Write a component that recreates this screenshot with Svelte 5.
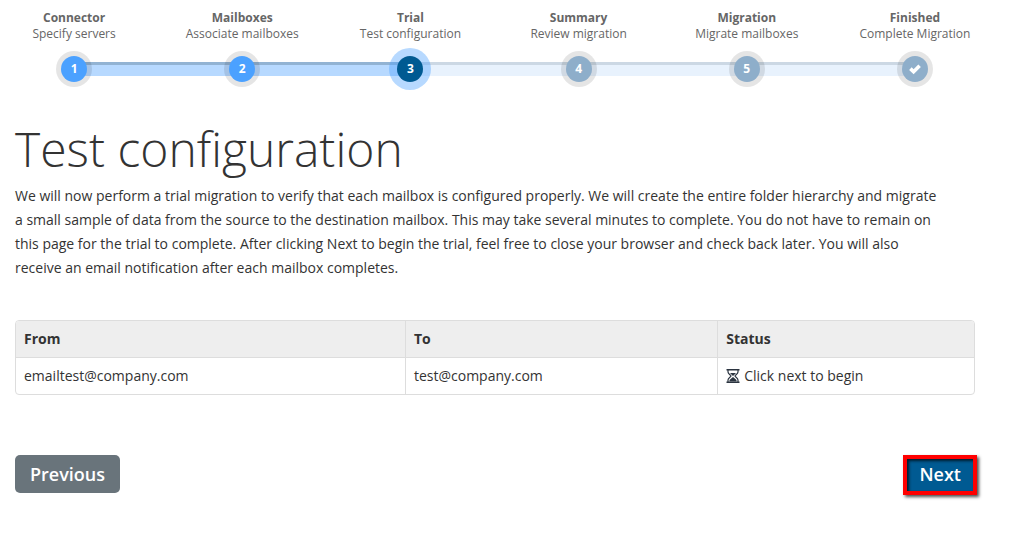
<script>
  const steps = [
    { title: 'Connector', detail: 'Specify servers', state: 'done' },
    { title: 'Mailboxes', detail: 'Associate mailboxes', state: 'done' },
    { title: 'Trial', detail: 'Test configuration', state: 'current' },
    { title: 'Summary', detail: 'Review migration', state: 'pending' },
    { title: 'Migration', detail: 'Migrate mailboxes', state: 'pending' },
    { title: 'Finished', detail: 'Complete Migration', state: 'pending' }
  ];
  const mailboxes = [
    { from: 'emailtest@company.com', to: 'test@company.com', status: 'Click next to begin' }
  ];
</script>

<main class="page">
  <ol class="steps">
    {#each steps as step, i}
      <li class="step {step.state}" aria-current={step.state === 'current' ? 'step' : undefined}>
        <strong>{step.title}</strong>
        <span>{step.detail}</span>
        <div class="marker">
          <span class="dot">
            {#if i === steps.length - 1}
              <svg width="14" height="12" viewBox="0 0 14 12" aria-hidden="true">
                <path d="M2.4 5.6 5.6 8.700 11.600 2.700" fill="none" stroke="#fff" stroke-width="3.600" />
              </svg>
            {:else}
              {i + 1}
            {/if}
          </span>
        </div>
      </li>
    {/each}
  </ol>

  <h1>Test configuration</h1>
  <p>
    We will now perform a trial migration to verify that each mailbox is configured properly. We
    will create the entire folder hierarchy and migrate a small sample of data from the source to
    the destination mailbox. This may take several minutes to complete. You do not have to remain
    on this page for the trial to complete. After clicking Next to begin the trial, feel free to
    close your browser and check back later. You will also receive an email notification after
    each mailbox completes.
  </p>

  <table>
    <thead>
      <tr>
        <th class="from" scope="col">From</th>
        <th class="to" scope="col">To</th>
        <th scope="col">Status</th>
      </tr>
    </thead>
    <tbody>
      {#each mailboxes as box}
        <tr>
          <td>{box.from}</td>
          <td>{box.to}</td>
          <td>
            <div class="status">
              <svg width="14" height="14" viewBox="0 0 14 14" aria-hidden="true">
                <path d="M.5.75h13M.5 13.25h13" stroke="#2b3440" stroke-width="1.500" />
                <path
                  d="M2 1v2C2 5 5 6 5 7S2 9 2 11v2M12 1v2C12 5 9 6 9 7s3 2 3 4v2"
                  fill="none"
                  stroke="#2b3440"
                  stroke-width="1.200"
                />
                <path d="M4 4h6L7 7zM3.500 12.500v-1.500L7 8l3.500 3v1.500z" fill="#2b3440" />
              </svg>
              {box.status}
            </div>
          </td>
        </tr>
      {/each}
    </tbody>
  </table>

  <div class="actions">
    <button type="button" class="previous">Previous</button>
    <button type="button" class="next">Next</button>
  </div>
</main>

<style>
  :global(body) {
    margin: 0;
    background: #fff;
  }

  .page {
    padding: 10px 44px 40px 15px;
    overflow-x: hidden;
    font: 14px/24px 'Open Sans', sans-serif;
    color: #333;
  }

  .steps {
    display: flex;
    margin: 0 -24px 0 -25px;
    padding: 0;
    list-style: none;
    font-size: 12px;
    line-height: 16px;
    color: #666;
  }

  .step {
    flex: 1 1 0;
    display: flex;
    flex-direction: column;
    align-items: center;
    min-width: 0;
  }

  .step strong {
    font-weight: 700;
  }

  .marker {
    position: relative;
    display: flex;
    justify-content: center;
    width: 100%;
    margin-top: 14px;
  }

  /* Track running from this marker to the next one */
  .marker::before {
    content: '';
    position: absolute;
    top: 6px;
    left: 50%;
    box-sizing: border-box;
    width: 100%;
    height: 14px;
    border-top: 3px solid #ccd8e4;
    background: #e8f2fd;
  }

  .done .marker::before {
    border-top-color: #92b3d3;
    background: #b7d9ff;
  }

  .step:last-child .marker::before {
    display: none;
  }

  .dot {
    position: relative;
    z-index: 1;
    display: flex;
    align-items: center;
    justify-content: center;
    width: 26px;
    height: 26px;
    border-radius: 50%;
    background: #8eaeca;
    box-shadow: 0 0 0 5px rgba(0, 0, 0, 0.1);
    color: #fff;
    font-weight: 700;
  }

  .done .dot {
    background: #4ba1ff;
  }

  .current .dot {
    background: #005a92;
    box-shadow: 0 0 0 8px rgba(75, 161, 255, 0.4);
  }

  h1 {
    margin: 34px 0 0;
    font-size: 48px;
    line-height: 66px;
    font-weight: 300;
  }

  p {
    margin: 2px 0 40px;
    padding-right: 30px;
  }

  table {
    width: 100%;
    table-layout: fixed;
    border: 1px solid #ddd;
    border-radius: 4px;
    border-spacing: 0;
    overflow: hidden;
  }

  .from {
    width: 40.6%;
  }

  .to {
    width: 32.6%;
  }

  th,
  td {
    box-sizing: border-box;
    padding: 6px 8px;
    text-align: left;
  }

  th {
    background: #eee;
    font-weight: 700;
  }

  td {
    border-top: 1px solid #ddd;
  }

  th + th,
  td + td {
    border-left: 1px solid #ddd;
  }

  .status {
    display: flex;
    align-items: center;
    gap: 4px;
  }

  .actions {
    display: flex;
    justify-content: space-between;
    align-items: flex-start;
    margin: 60px -2px 0 0;
  }

  button {
    box-sizing: border-box;
    border: 0;
    color: #fff;
    font: 600 18px/24px 'Open Sans', sans-serif;
    cursor: pointer;
  }

  .previous {
    padding: 7px 15px;
    border-radius: 5px;
    background: #69747b;
  }

  .next {
    padding: 3px 12px 5px;
    border: 4px solid #f00;
    background: #005a92;
    box-shadow:
      2px 2px 3px rgba(0, 0, 0, 0.7),
      inset 2px 2px 3px rgba(0, 0, 0, 0.7);
  }
</style>
